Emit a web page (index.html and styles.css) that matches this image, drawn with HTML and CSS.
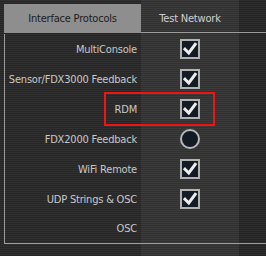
FILE: index.html
```html
<!DOCTYPE html>
<html lang="en"><head><meta charset="UTF-8">
  <title>Interface Protocols</title>
<link rel="stylesheet" href="styles.css"></head>
<body>
<div class="panel">
  <div class="tabs">
    <div class="tab tab-on">Interface Protocols</div>
    <div class="tab">Test Network</div>
    <div class="tab tab-empty"></div>
  </div>
  <div class="list">
    <div class="row">
      <span class="name">MultiConsole</span>
      <span class="cell"><span class="check"><svg viewBox="0 0 16 16"><path d="M3 8.2 L6.8 12 L13.2 3.4"/></svg></span></span>
    </div>
    <div class="row">
      <span class="name">Sensor/FDX3000 Feedback</span>
      <span class="cell"><span class="check"><svg viewBox="0 0 16 16"><path d="M3 8.2 L6.8 12 L13.2 3.4"/></svg></span></span>
    </div>
    <div class="row">
      <span class="name">RDM</span>
      <span class="cell"><span class="check"><svg viewBox="0 0 16 16"><path d="M3 8.2 L6.8 12 L13.2 3.4"/></svg></span></span>
      <div class="mark"></div>
    </div>
    <div class="row">
      <span class="name">FDX2000 Feedback</span>
      <span class="cell"><span class="radio"></span></span>
    </div>
    <div class="row">
      <span class="name">WiFi Remote</span>
      <span class="cell"><span class="check"><svg viewBox="0 0 16 16"><path d="M3 8.2 L6.8 12 L13.2 3.4"/></svg></span></span>
    </div>
    <div class="row">
      <span class="name">UDP Strings &amp; OSC</span>
      <span class="cell"><span class="check"><svg viewBox="0 0 16 16"><path d="M3 8.2 L6.8 12 L13.2 3.4"/></svg></span></span>
    </div>
    <div class="row">
      <span class="name">OSC</span>
      <span class="cell"></span>
    </div>
  </div>
</div>
</body></html>
```

FILE: styles.css
```css
html,body{
  margin: 0;
  padding: 0;
  width: 266px;
  height: 256px;
  overflow: hidden;
}
body{
  font-family: "DejaVu Sans Condensed", "DejaVu Sans", sans-serif;
  font-size: 11px;
  letter-spacing: -0.2px;
  background:
    linear-gradient(90deg, rgba(0,0,0,0) 141px, rgba(255,255,255,0.05) 141px, rgba(255,255,255,0.05) 239px, rgba(0,0,0,0.06) 239px),
    repeating-linear-gradient(180deg, #303030 0, #303030 1px, #262626 1px, #262626 2px);
}
.panel{
  padding: 4px 0 0 4px;
}
.tabs{
  display: grid;
  grid-template-columns: 137px 98px 1fr;
  height: 29px;
}
.tab{
  display: flex;
  align-items: center;
  justify-content: center;
  color: #d0d0d0;
  border-bottom: 1px solid #9c9c9c;
}
.tab-on{
  background: #8e8e8e;
  color: #1c1c1c;
  border-bottom: 0;
}
.list{
  border-left: 1px solid #9c9c9c;
  border-bottom: 1px solid #9c9c9c;
  margin-top: 1px;
}
.row{
  position: relative;
  display: grid;
  grid-template-columns: 136px 98px;
  height: 30px;
  align-items: center;
}
.row:last-child{
  height: 29px;
}
.name{
  text-align: right;
  color: #c8c8c8;
  padding-right: 4px;
  white-space: nowrap;
}
.cell{
  display: flex;
  justify-content: center;
}
.check{
  width: 16px;
  height: 16px;
  border: 2px solid #b2b2b2;
  background: #151b25;
  display: block;
}
.check svg{
  display: block;
  width: 16px;
  height: 16px;
}
.check path{
  fill: none;
  stroke: #ececec;
  stroke-width: 3;
  stroke-linecap: square;
}
.radio{
  width: 16px;
  height: 16px;
  border: 2px solid #b8b8b8;
  border-radius: 50%;
  background: #141a24;
  display: block;
}
.mark{
  position: absolute;
  left: 99px;
  top: -2px;
  width: 107px;
  height: 30px;
  border: 2px solid #f01414;
}
```
